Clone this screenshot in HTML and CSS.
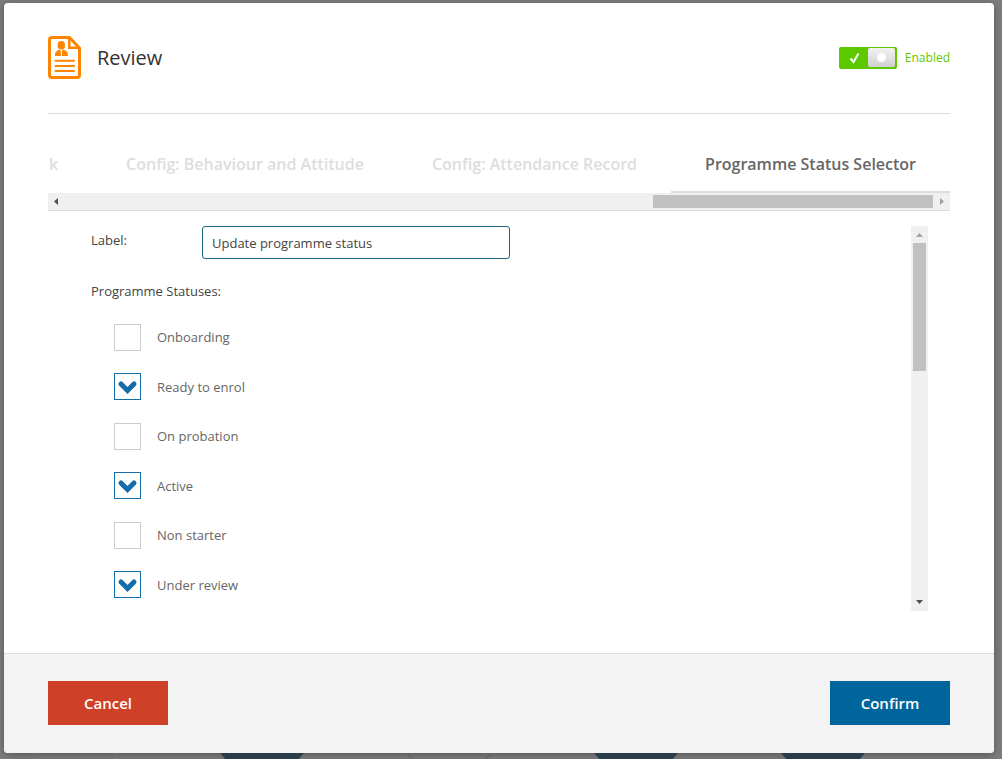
FILE: index.html
```html
<!DOCTYPE html>
<html lang="en">
<head>
<meta charset="UTF-8" />
<meta name="viewport" content="width=device-width, initial-scale=1" />
<title>Review</title>
<link rel="stylesheet" href="styles.css">
</head>

<body>
<div class="modal" role="dialog" aria-labelledby="title">

  <div class="modal-body">
    <header class="modal-header">
      <svg class="doc-icon" viewBox="0 0 33 43" aria-hidden="true">
        <path d="M4 1.5H21.5L31.5 12V39Q31.5 41.5 29 41.5H4Q1.5 41.5 1.5 39V4Q1.5 1.5 4 1.5Z" fill="none" stroke="#ff8500" stroke-width="3" />
        <path d="M21.300 2V11.700H31" fill="none" stroke="#ff8500" stroke-width="2.500" />
        <ellipse cx="13.300" cy="9.300" rx="3.700" ry="4.300" fill="#ff8500" />
        <path d="M7 20V18Q7.500 15 11.500 13.500L13.300 15.500L15.200 13.500Q19.500 15 19.800 18V20Z" fill="#ff8500" />
        <path d="M13.300 15V20" stroke="#fff" stroke-width="1" />
        <path d="M7.500 24.800H26M7.500 30H26M7.500 35H26" stroke="#ff8500" stroke-width="2" stroke-linecap="round" />
      </svg>
      <h1 id="title">Review</h1>
      <label class="switch">
        <input type="checkbox" checked />
        <span class="switch-track">
          <svg class="switch-tick" viewBox="0 0 12 12" aria-hidden="true">
            <path d="M1.500 6.500L4.500 10L9.500 1.500" fill="none" stroke="#fff" stroke-width="2" />
          </svg>
          <span class="switch-knob"></span>
        </span>
        <span>Enabled</span>
      </label>
    </header>

    <nav class="tabs">
      <a href="#" class="tab">k</a>
      <a href="#" class="tab">Config: Behaviour and Attitude</a>
      <a href="#" class="tab">Config: Attendance Record</a>
      <a href="#" class="tab active">Programme Status Selector</a>
    </nav>
    <div class="scroll-x">
      <svg class="arrow" viewBox="0 0 17 17"><path d="M10 5V12L6 8.500Z" fill="#505050" /></svg>
      <div class="thumb-x"></div>
      <svg class="arrow" viewBox="0 0 17 17"><path d="M7 5V12L11 8.500Z" fill="#a3a3a3" /></svg>
    </div>

    <div class="panel">
      <form class="fields">
        <div class="field">
          <label for="label">Label:</label>
          <input type="text" id="label" value="Update programme status" />
        </div>
        <fieldset>
          <legend>Programme Statuses:</legend>
          <div class="statuses">
            <label class="status"><input type="checkbox" /> Onboarding</label>
            <label class="status"><input type="checkbox" checked /> Ready to enrol</label>
            <label class="status"><input type="checkbox" /> On probation</label>
            <label class="status"><input type="checkbox" checked /> Active</label>
            <label class="status"><input type="checkbox" /> Non starter</label>
            <label class="status"><input type="checkbox" checked /> Under review</label>
          </div>
        </fieldset>
      </form>
      <div class="scroll-y">
        <svg class="arrow" viewBox="0 0 17 17"><path d="M5 11H12L8.500 7Z" fill="#a3a3a3" /></svg>
        <div class="thumb-y"></div>
        <svg class="arrow" viewBox="0 0 17 17"><path d="M5 6H12L8.500 10Z" fill="#505050" /></svg>
      </div>
    </div>
  </div>

  <footer class="modal-footer">
    <button type="button" class="btn cancel">Cancel</button>
    <button type="button" class="btn confirm">Confirm</button>
  </footer>
</div>

<!-- hexagons of the page behind the dialog -->
<div class="backdrop-row">
  <svg class="hex faint" viewBox="0 0 84 8"><path d="M0 0L7 8M84 0L77 8" /></svg>
  <svg class="hex solid" viewBox="0 0 84 8"><path d="M0 0H84L77 8H7Z" /></svg>
  <svg class="hex outline" viewBox="0 0 84 8"><path d="M0 0L7 8M84 0L77 8" /></svg>
  <svg class="hex solid" viewBox="0 0 84 8"><path d="M0 0H84L77 8H7Z" /></svg>
  <svg class="hex solid" viewBox="0 0 84 8"><path d="M0 0H84L77 8H7Z" /></svg>
</div>
</body>
</html>
```
FILE: styles.css
```css
* {
  box-sizing: border-box;
}

body {
  font-family: "Trebuchet MS", "Open Sans", sans-serif;
  font-size: 13px;
  line-height: 18px;
  margin: 0;
  padding: 3px 8px 0 4px;
  height: 100vh;
  overflow: hidden;
  background-color: #7d7d7d;
  color: #444;
}

.modal {
  background-color: #fff;
  border-radius: 4px;
  overflow: hidden;
  box-shadow: 0 2px 8px rgba(0, 0, 0, 0.3);
}

.modal-body {
  padding: 0 44px 42px;
}

.modal-header {
  display: flex;
  align-items: center;
  height: 111px;
  padding-bottom: 1px;
  border-bottom: 1px solid #ddd;
}

.doc-icon {
  width: 33px;
  height: 43px;
}

h1 {
  flex: 1;
  margin: 0 16px;
  font-size: 20px;
  line-height: 28px;
  font-weight: normal;
  color: #333;
}

.switch {
  display: flex;
  align-items: center;
  gap: 8px;
  font-size: 12px;
  color: #5cc800;
}

.switch input {
  position: absolute;
  opacity: 0;
}

.switch-track {
  display: flex;
  align-items: center;
  justify-content: space-between;
  width: 58px;
  height: 22px;
  padding: 0 2px 0 10px;
  border-radius: 2px;
  background-color: #5cc800;
}

.switch-tick {
  width: 12px;
  height: 12px;
}

.switch-knob {
  display: flex;
  align-items: center;
  justify-content: center;
  width: 27px;
  height: 19px;
  border-radius: 2px;
  background: linear-gradient(#f2f2f2, #d0d0d0);
}

.switch-knob::before {
  content: "";
  width: 9px;
  height: 9px;
  border-radius: 50%;
  background-color: #fff;
}

/* tabs, scrolled to the last one */
.tabs {
  display: flex;
  justify-content: flex-end;
  height: 79px;
  overflow: hidden;
}

.tab {
  flex: none;
  padding: 0 34px;
  font-size: 16px;
  line-height: 100px;
  font-weight: 600;
  color: #ddd;
  text-decoration: none;
}

.tab.active {
  color: #666;
  border-bottom: 2px solid #ddd;
}

.scroll-x {
  display: flex;
  align-items: center;
  justify-content: space-between;
  height: 18px;
  background-color: #f0f0f0;
  border-bottom: 1px solid #ddd;
}

.arrow {
  flex: none;
  display: block;
  width: 17px;
  height: 17px;
}

.thumb-x {
  width: 31%;
  height: 13px;
  margin-left: auto;
  background-color: #c1c1c1;
}

.panel {
  display: flex;
  justify-content: space-between;
  padding: 15px 22px 0 43px;
}

.field {
  display: flex;
  align-items: flex-start;
}

.field label {
  width: 111px;
  padding-top: 5px;
}

.field input {
  width: 308px;
  height: 33px;
  padding: 0 9px;
  border: 1px solid #1b657c;
  border-radius: 3px;
  font: inherit;
  color: #444;
}

fieldset {
  margin: 23px 0 0;
  padding: 0;
  border: none;
}

legend {
  padding: 0;
  margin-bottom: 23px;
}

.statuses {
  display: flex;
  flex-direction: column;
  justify-content: space-between;
  height: 276px;
  padding-left: 23px;
}

.status {
  display: flex;
  align-items: center;
  gap: 16px;
  height: 28px;
  color: #666;
}

.status input {
  appearance: none;
  width: 27px;
  height: 27px;
  margin: 0;
  border: 1px solid #ccc;
  background-color: #fff;
}

.status input:checked {
  border-color: #146ca8;
  background: #fff url("data:image/svg+xml,%3Csvg xmlns='http://www.w3.org/2000/svg' viewBox='0 0 25 25'%3E%3Cpath d='M6 10L12.500 16.500L19 10' fill='none' stroke='%23146ca8' stroke-width='5' stroke-linecap='round'/%3E%3C/svg%3E") center / 25px 25px no-repeat;
}

.scroll-y {
  display: flex;
  flex-direction: column;
  align-items: center;
  justify-content: space-between;
  width: 17px;
  height: 385px;
  background-color: #f0f0f0;
}

.thumb-y {
  width: 13px;
  height: 128px;
  margin-bottom: auto;
  background-color: #c1c1c1;
}

.modal-footer {
  display: flex;
  justify-content: space-between;
  padding: 27px 44px 28px;
  border-top: 1px solid #ddd;
  background-color: #f3f3f3;
}

.btn {
  width: 120px;
  height: 44px;
  border: none;
  font-family: inherit;
  font-size: 15px;
  font-weight: 600;
  color: #fff;
  cursor: pointer;
}

.cancel {
  background-color: #ce4128;
}

.confirm {
  background-color: #00659c;
}

.backdrop-row {
  display: flex;
  gap: 103px;
  padding-left: 29px;
}

.hex {
  flex: none;
  width: 84px;
  height: 8px;
  fill: none;
}

.hex.faint {
  stroke: #757575;
}

.hex.outline {
  stroke: #5d5d5d;
}

.hex.solid {
  fill: #2a3d4a;
}
```
